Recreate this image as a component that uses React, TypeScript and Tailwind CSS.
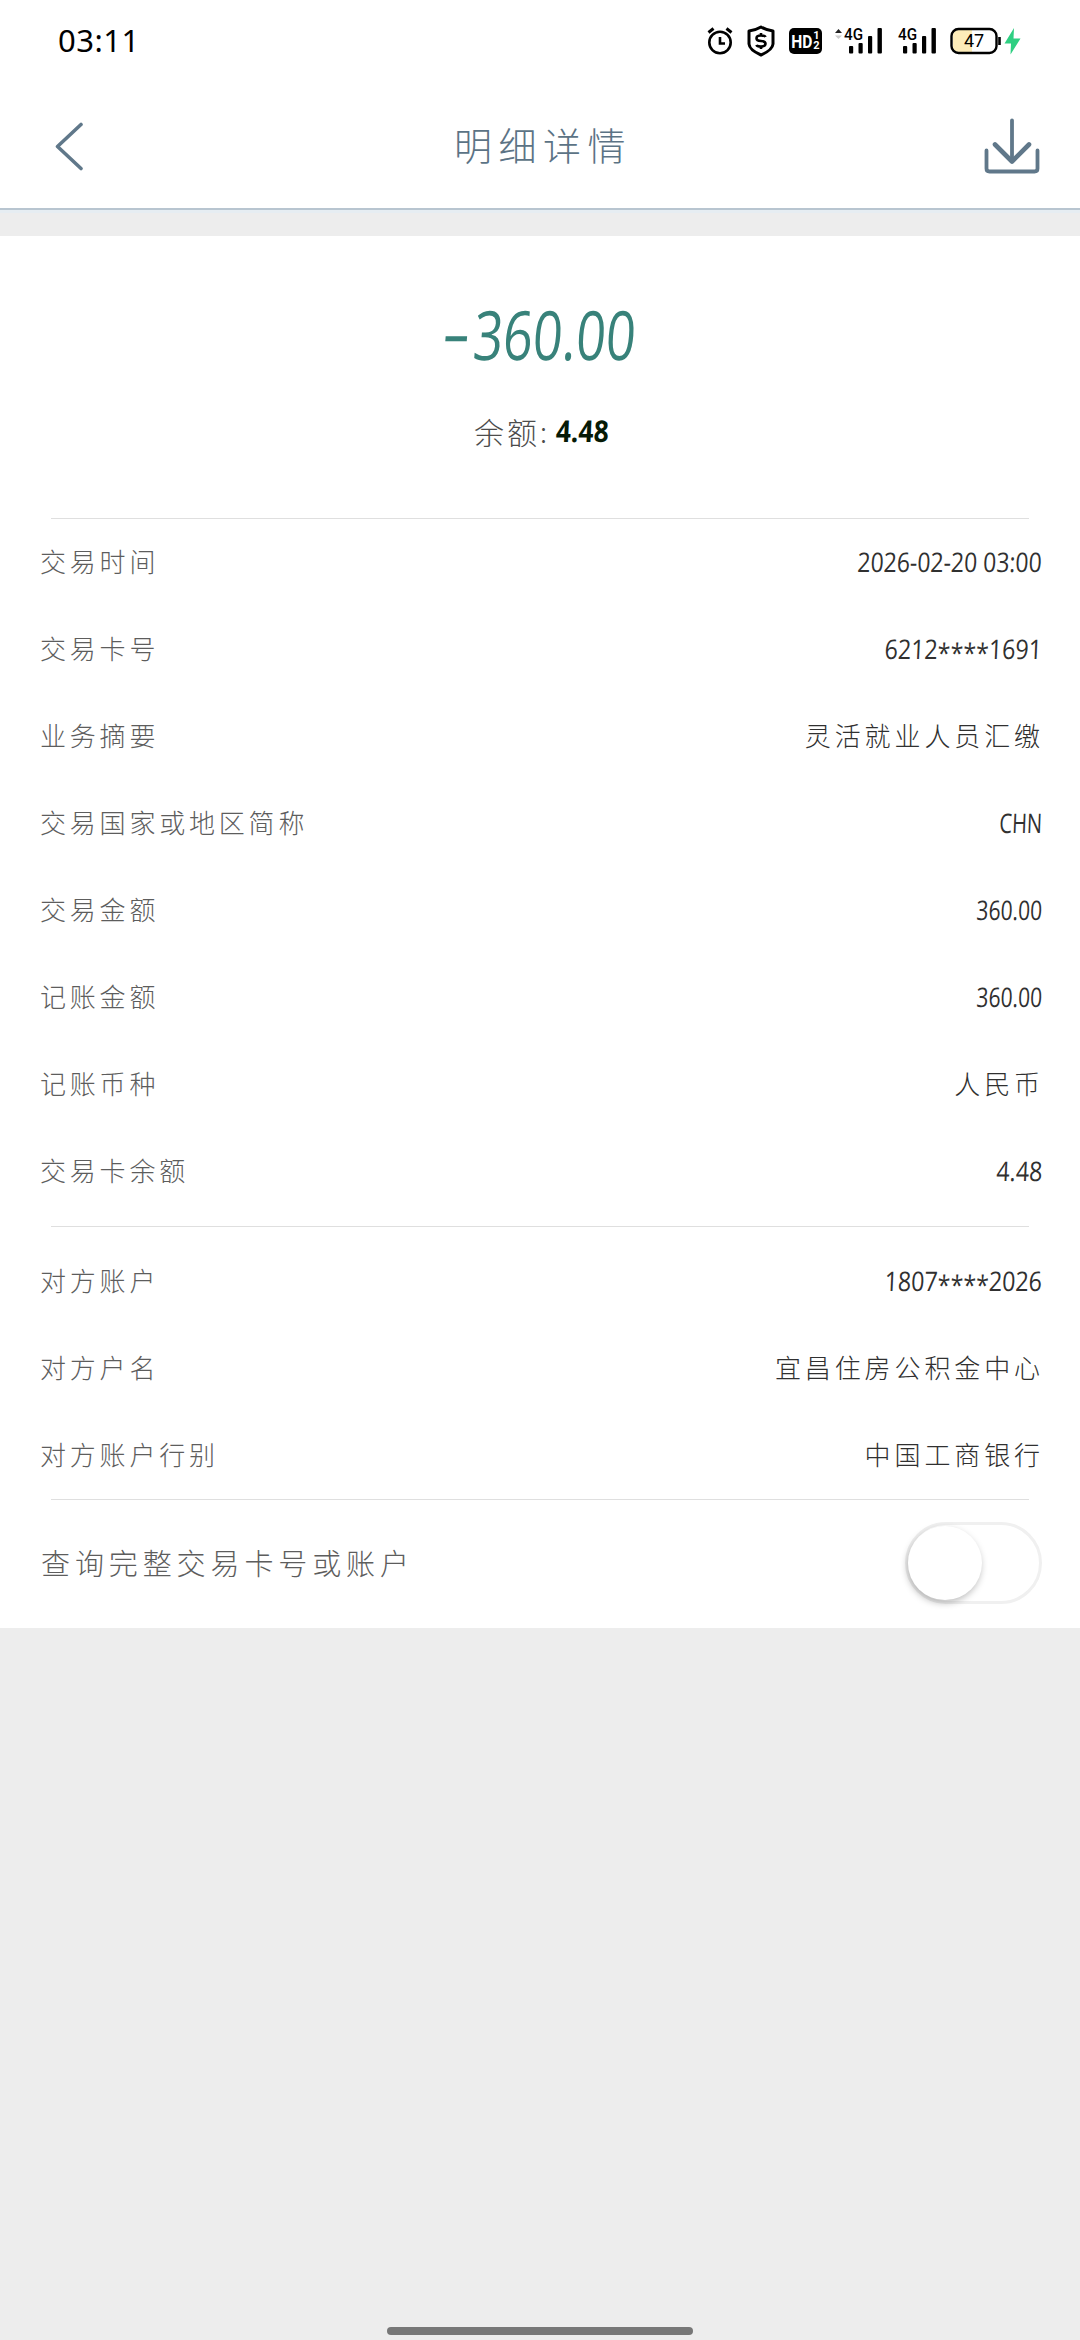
import type { ReactNode } from 'react';

type Row = {
  label: string;
  value: string;
  latin?: string;
};

const cjk = "font-['Noto_Sans_CJK_SC',sans-serif]";

const tradeRows: Row[] = [
  { label: '交易时间', value: '2026-02-20 03:00', latin: 'scale-x-[0.85]' },
  { label: '交易卡号', value: '6212****1691', latin: 'scale-x-[0.86]' },
  { label: '业务摘要', value: '灵活就业人员汇缴' },
  { label: '交易国家或地区简称', value: 'CHN', latin: 'scale-x-[0.75]' },
  { label: '交易金额', value: '360.00', latin: 'scale-x-[0.78]' },
  { label: '记账金额', value: '360.00', latin: 'scale-x-[0.78]' },
  { label: '记账币种', value: '人民币' },
  { label: '交易卡余额', value: '4.48', latin: 'scale-x-[0.86]' },
];

const accountRows: Row[] = [
  { label: '对方账户', value: '1807****2026', latin: 'scale-x-[0.86]' },
  { label: '对方户名', value: '宜昌住房公积金中心' },
  { label: '对方账户行别', value: '中国工商银行' },
];

function Signal({ arrows }: { arrows?: boolean }) {
  return (
    <svg className="h-[34px] w-[48px]" viewBox="0 -4 48 34">
      {arrows && (
        <>
          <path d="M0 7 L3.5 3 L7 7" fill="#222" />
          <path d="M0 9.5 L3.5 13 L7 9.5" fill="#ccc" />
        </>
      )}
      <text
        x="9"
        y="14"
        fontSize="16"
        fontFamily="Roboto"
        fontWeight="500"
        textLength="19"
        lengthAdjust="spacingAndGlyphs"
      >
        4G
      </text>
      <rect x="14" y="20" width="4.2" height="7.5" rx="1" />
      <rect x="23.5" y="17" width="4.2" height="10.5" rx="1" />
      <rect x="33" y="10" width="4.2" height="17.5" rx="1" />
      <rect x="42.5" y="2" width="4.4" height="25.5" rx="1" />
    </svg>
  );
}

function StatusBar() {
  return (
    <div className="flex h-[82px] items-center justify-between pl-[58px] pr-[57px]">
      <span className="-mt-[2px] font-['Noto_Sans',sans-serif] text-[31px] leading-none tracking-[0.5px] text-black">
        03:11
      </span>
      <div className="flex items-center">
        {/* ALARM */}
        <svg
          className="mr-[13px] h-[30px] w-[28px]"
          viewBox="0 0 28 30"
          fill="none"
          stroke="#000"
          strokeWidth="2.6"
        >
          <circle cx="14" cy="16.5" r="10.7" />
          <path d="M14 11 V17.5 H19" />
          <path d="M2.5 6.5 L7.5 2.5 M25.5 6.5 L20.5 2.5" strokeWidth="3" />
        </svg>
        {/* SHIELD */}
        <svg
          className="mr-[14px] h-[32px] w-[28px]"
          viewBox="0 0 28 32"
          fill="none"
          stroke="#000"
          strokeWidth="3"
        >
          <path
            d="M14 2 Q20 5.5 26 6 V19 Q25.5 25 14 30 Q2.5 25 2 19 V6 Q8 5.5 14 2 Z"
            strokeLinejoin="round"
          />
          <path
            d="M18.5 12 Q18 10.5 14 10.5 Q9.5 10.5 9.5 13.2 Q9.5 15.7 14 16 Q18.5 16.3 18.5 18.8 Q18.5 21.5 14 21.5 Q10 21.5 9.5 19.8 M14 8 V10.5 M14 21.5 V24"
            strokeWidth="2.6"
          />
        </svg>
        {/* HD */}
        <div className="mr-[13px] flex h-[26px] w-[33px] items-center justify-center rounded-[5px] bg-black font-['Roboto',sans-serif] font-bold text-white">
          <span className="-ml-[2px] -mr-[2px] scale-x-[0.82] text-[19px] leading-none">HD</span>
          <span className="flex flex-col text-[11px] leading-[10px]">
            <span>1</span>
            <span>2</span>
          </span>
        </div>
        <div className="-mt-[4px] flex gap-[6px]">
          <Signal arrows />
          <Signal />
        </div>
        {/* BATTERY */}
        <svg className="ml-[13px] h-[30px] w-[73px]" viewBox="0 0 73 30">
          <rect x="2" y="3.5" width="44" height="23" rx="6.5" fill="#fff" />
          <path d="M22 4 H8.5 Q3 4 3 9.5 V20.5 Q3 26 8.5 26 H22 Z" fill="#fdecb9" />
          <rect
            x="1.5"
            y="3"
            width="45"
            height="24"
            rx="7"
            fill="none"
            stroke="#000"
            strokeWidth="2.4"
          />
          <path d="M49.5 11 V19" stroke="#000" strokeWidth="2.6" />
          <text
            x="24"
            y="21"
            fontSize="18"
            fontFamily="Roboto"
            fontWeight="400"
            textAnchor="middle"
          >
            47
          </text>
          <path d="M64 2 L54.5 17.5 H61 L60.5 28.5 L70.5 12.5 H63.5 Z" fill="#2fcf82" />
        </svg>
      </div>
    </div>
  );
}

function Header() {
  return (
    <header className="flex h-[126px] items-center justify-between pl-[55px] pr-[40px]">
      <svg
        className="mt-[1px] h-[50px] w-[30px]"
        viewBox="0 0 30 50"
        fill="none"
        stroke="#60788a"
        strokeWidth="3.6"
        strokeLinecap="round"
        strokeLinejoin="round"
      >
        <path d="M26 3.5 L2.5 25.5 L26 47.5" />
      </svg>
      <h1
        className={`${cjk} -mt-[2px] ml-[17px] text-[38px] font-light leading-none tracking-[6.5px] text-[#5c7385]`}
      >
        明细详情
      </h1>
      <svg
        className="h-[58px] w-[56px]"
        viewBox="0 0 56 58"
        fill="none"
        stroke="#60788a"
        strokeWidth="4"
        strokeLinecap="round"
        strokeLinejoin="round"
      >
        <path d="M28 4.5 V45" strokeWidth="3.8" />
        <path d="M11 28.5 L28 45.5 L45 28.5" strokeWidth="4.6" />
        <path d="M2.5 34.5 V52.5 Q2.5 55.5 5.5 55.5 H50.5 Q53.5 55.5 53.5 52.5 V34.5" strokeWidth="3.8" />
      </svg>
    </header>
  );
}

function Divider() {
  return <div className="mx-[51px] h-px bg-[#dfdfdf]" />;
}

function Latin({ text, scale }: { text: string; scale: string }) {
  return (
    <span
      className={`${scale} inline-block origin-right -skew-x-3 whitespace-pre font-['Open_Sans',sans-serif] text-[27px] text-[#303030]`}
    >
      {text.split(/(\*+)/).map((part, i) =>
        part.startsWith('*') ? (
          <span key={i} className="inline-block translate-y-[4px]">
            {part}
          </span>
        ) : (
          part
        ),
      )}
    </span>
  );
}

function DetailRow({ label, value, latin }: Row) {
  return (
    <div className="flex h-[87px] items-center justify-between pb-[3px] pl-[40px] pr-[38px] leading-none">
      <span className={`${cjk} text-[26px] font-light tracking-[3.8px] text-[#5d5d5d]`}>
        {label}
      </span>
      {latin ? (
        <Latin text={value} scale={latin} />
      ) : (
        <span
          className={`${cjk} -mr-[2px] text-[26px] font-light tracking-[3.9px] text-[#303030]`}
        >
          {value}
        </span>
      )}
    </div>
  );
}

function Card({ children }: { children: ReactNode }) {
  return <main className="h-[1392px] bg-white">{children}</main>;
}

export default function App() {
  return (
    <div className="flex h-[2340px] w-[1080px] flex-col overflow-hidden bg-[#ededed]">
      <div className="bg-white">
        <StatusBar />
        <Header />
      </div>
      <div className="h-[2px] bg-[#b8c5d0]" />
      <div className="mb-[23px] h-[3px] bg-[#e6edf2]" />

      <Card>
        {/* AMOUNT */}
        <div className="flex h-[282px] flex-col items-center pt-[62px]">
          <div className="ml-[11px] -skew-x-6 scale-x-[0.765] font-['Open_Sans',sans-serif] text-[68px] font-medium leading-[72px] text-[#38827a]">
            <span className="mr-[4px] inline-block origin-right -translate-y-[3px] scale-x-[1.7] font-normal">
              -
            </span>
            360.00
          </div>
          <div className="mt-[38px] flex h-[46px] items-center leading-none">
            <span className={`${cjk} text-[30px] font-light tracking-[3px] text-[#4c4c4c]`}>
              余额
            </span>
            <span className={`${cjk} mr-[9px] text-[28px] font-light text-[#4c4c4c]`}>:</span>
            <span className="-mr-[10px] origin-left -skew-x-3 scale-x-[0.88] font-['Open_Sans',sans-serif] text-[30px] font-bold text-[#061a06]">
              4.48
            </span>
          </div>
        </div>

        <Divider />
        {tradeRows.map((row) => (
          <DetailRow key={row.label} {...row} />
        ))}
        <div className="h-[11px]" />
        <Divider />
        <div className="h-[11px]" />
        {accountRows.map((row) => (
          <DetailRow key={row.label} {...row} />
        ))}
        <Divider />

        {/* FULL NUMBER SWITCH */}
        <div className="flex h-[125px] items-center justify-between pl-[41px] pr-[38px]">
          <span className={`${cjk} text-[29px] font-light leading-none tracking-[4.9px] text-[#5d5d5d]`}>
            查询完整交易卡号或账户
          </span>
          <button
            className="flex h-[82px] w-[137px] items-center rounded-full border-[3px] border-[#f0f0f0] bg-white"
            aria-label="查询完整交易卡号或账户"
          >
            <span className="size-[74px] rounded-full bg-white shadow-[-1px_3px_7px_rgba(0,0,0,0.26)]" />
          </button>
        </div>
      </Card>

      {/* HOME INDICATOR */}
      <div className="mx-auto mb-[5px] mt-auto h-[8px] w-[306px] rounded-full bg-[#777777]" />
    </div>
  );
}
